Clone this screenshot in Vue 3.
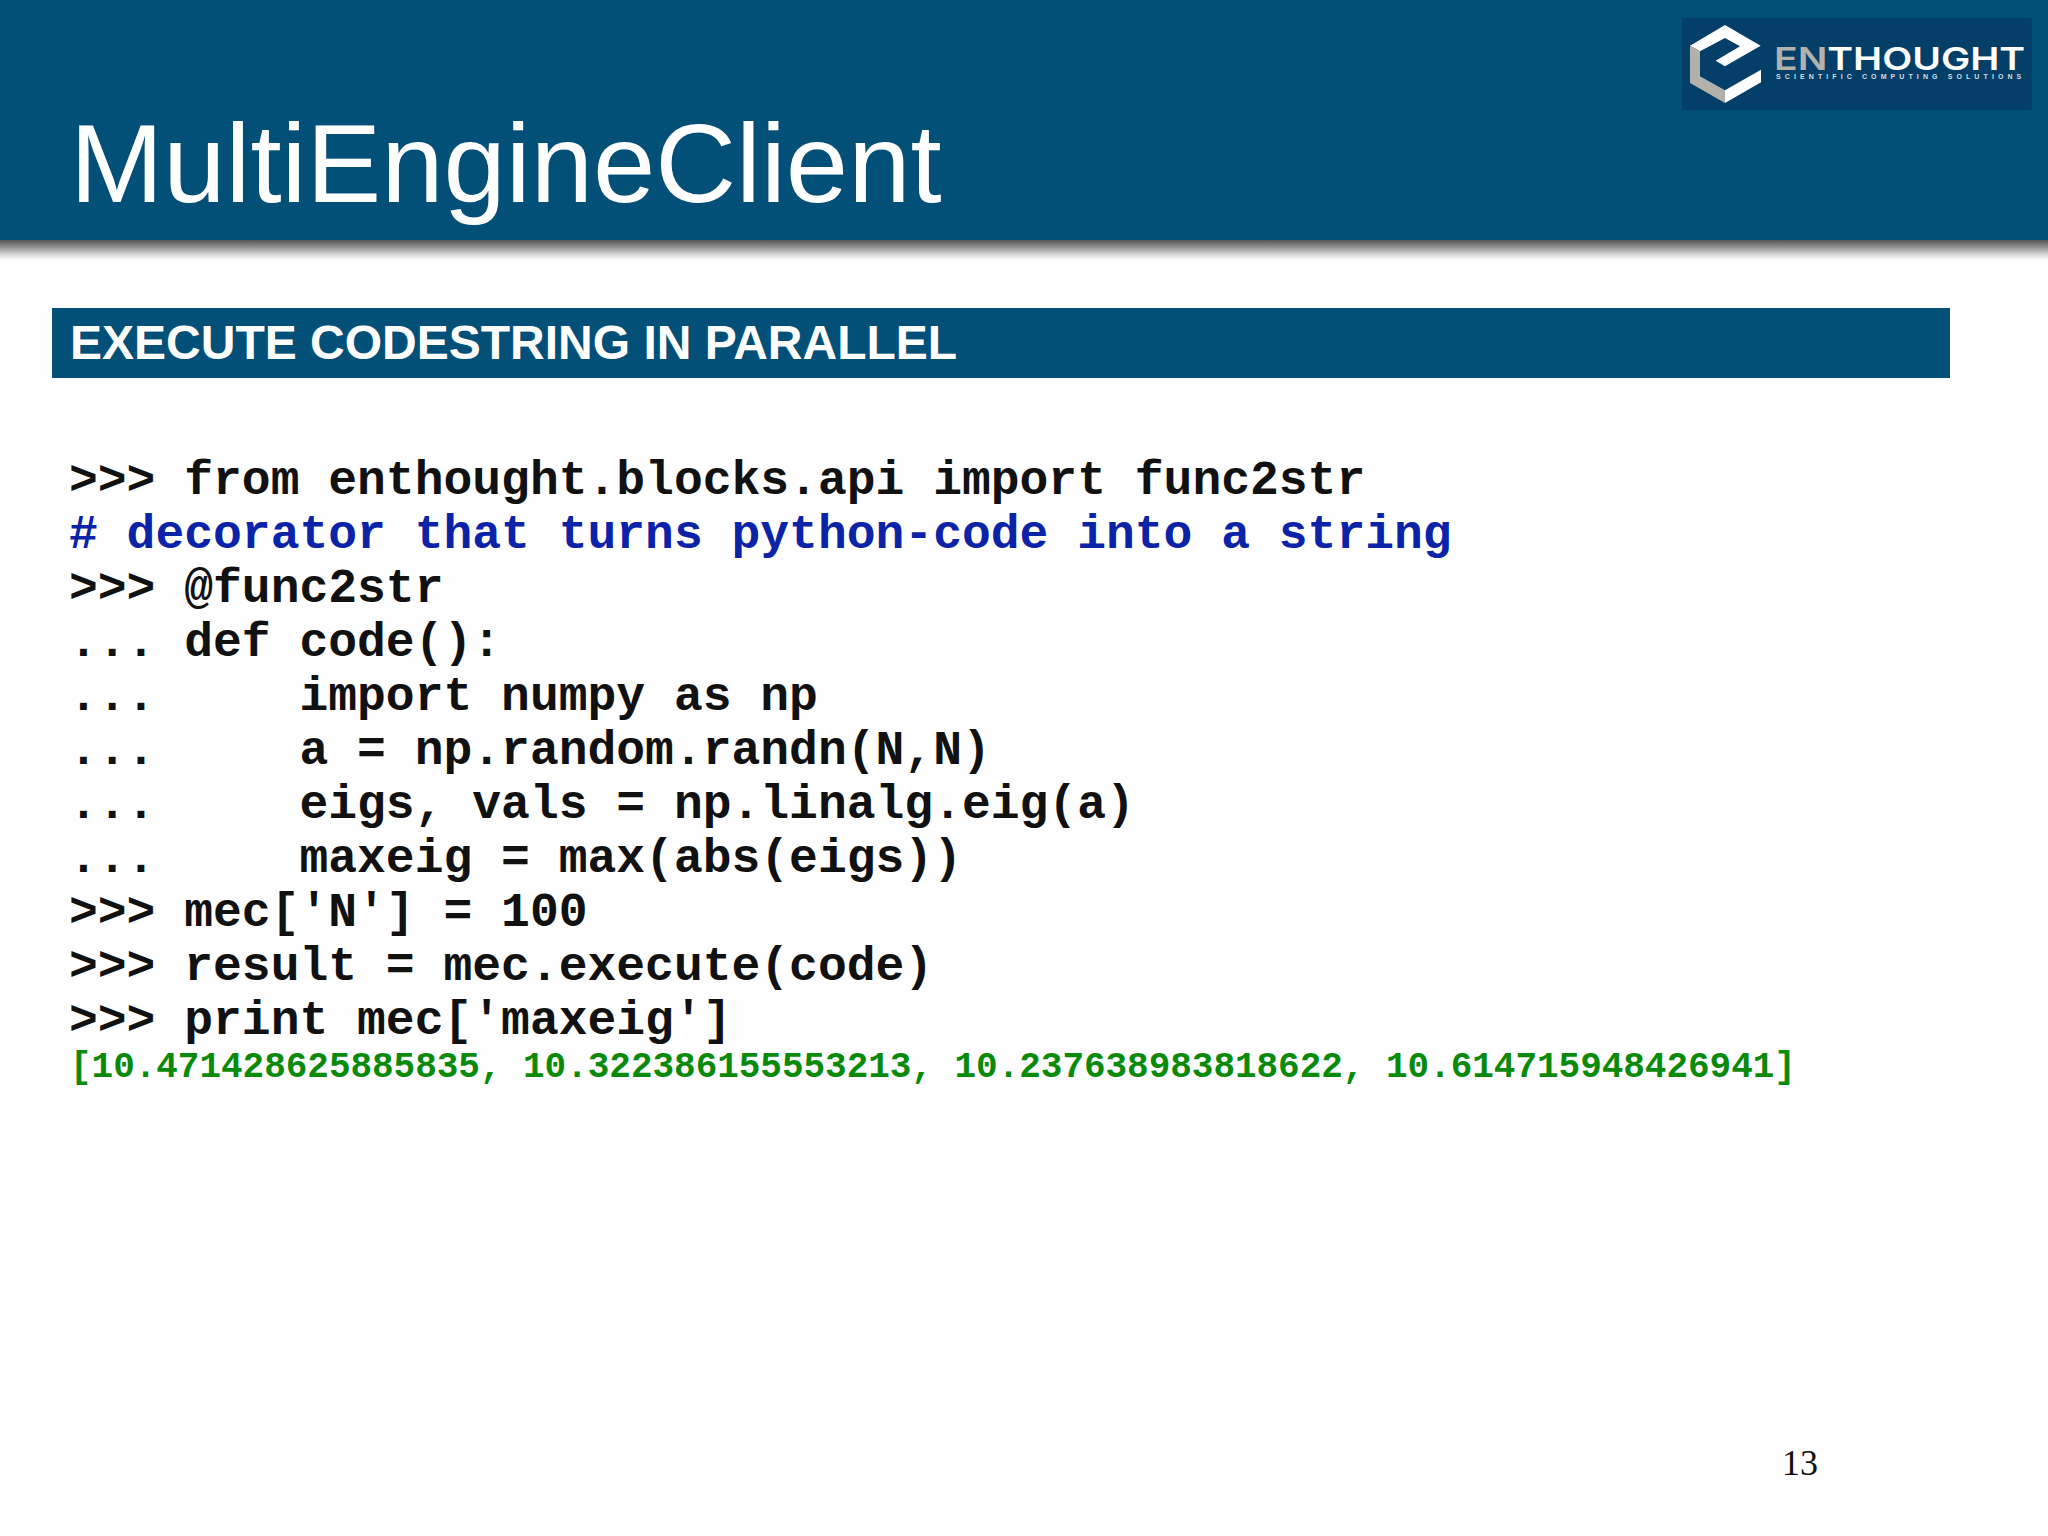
<script setup>
const lines = [
  { text: ">>> from enthought.blocks.api import func2str" },
  { text: "# decorator that turns python-code into a string", comment: true },
  { text: ">>> @func2str" },
  { text: "... def code():" },
  { text: "...     import numpy as np" },
  { text: "...     a = np.random.randn(N,N)" },
  { text: "...     eigs, vals = np.linalg.eig(a)" },
  { text: "...     maxeig = max(abs(eigs))" },
  { text: ">>> mec['N'] = 100" },
  { text: ">>> result = mec.execute(code)" },
  { text: ">>> print mec['maxeig']" },
];
</script>

<template>
  <div class="slide">
    <header class="header">
      <h1 class="title">MultiEngineClient</h1>
      <div class="logo">
        <svg class="mark" viewBox="30 26 213 234" aria-hidden="true">
          <polygon fill="#ffffff" points="30,88 135,26 242,88 135,150 107,133 180,90 135,65 60,105" />
          <polygon fill="#b3b1ab" points="30,88 60,105 60,180 135,222 135,260 30,200" />
          <polygon fill="#ffffff" points="135,222 243,160 243,198 135,260" />
        </svg>
        <div class="wordmark">
          <div class="brand"><span class="brand-en">EN</span>THOUGHT</div>
          <div class="tagline">SCIENTIFIC COMPUTING SOLUTIONS</div>
        </div>
      </div>
    </header>
    <div class="shadow"></div>
    <div class="section">EXECUTE CODESTRING IN PARALLEL</div>
    <div class="code">
      <div v-for="(line, i) in lines" :key="i" class="line" :class="{ comment: line.comment }">{{ line.text }}</div>
      <div class="output">[10.471428625885835, 10.322386155553213, 10.237638983818622, 10.614715948426941]</div>
    </div>
    <div class="page-number">13</div>
  </div>
</template>

<style>
html, body {
  margin: 0;
  background: #ffffff;
}
</style>

<style scoped>
.slide {
  width: 2048px;
  height: 1536px;
  overflow: hidden;
  background: #fefefe;
}
.header {
  height: 240px;
  background: #024f78;
  display: flex;
  justify-content: space-between;
  align-items: flex-start;
  padding: 18px 16px 0 70px;
  box-sizing: border-box;
}
.title {
  margin: 90px 0 0;
  color: #ffffff;
  font-family: "Liberation Sans", Arial, sans-serif;
  font-weight: 400;
  font-size: 112px;
  line-height: 112px;
}
.logo {
  width: 350px;
  height: 92px;
  box-sizing: border-box;
  padding: 7px 0 0 8px;
  background: #033f68;
  display: flex;
  gap: 13px;
}
.mark {
  width: 71px;
  height: 78px;
  flex: none;
}
.wordmark {
  padding-top: 21px;
  width: 247px;
}
.brand {
  color: #ffffff;
  font-family: Inter, "Liberation Sans", sans-serif;
  font-weight: 600;
  font-size: 31px;
  line-height: 26px;
  white-space: nowrap;
  transform: scaleX(1.26);
  transform-origin: left center;
}
.brand-en {
  color: #b3b1ab;
}
.tagline {
  margin: 1px 0 0 2px;
  color: #d6dde2;
  font-family: "Liberation Sans", Arial, sans-serif;
  font-weight: 700;
  font-size: 7px;
  line-height: 8px;
  letter-spacing: 4.1px;
  white-space: nowrap;
}
.shadow {
  height: 20px;
  background: linear-gradient(to bottom, #565656, #8f8f8f 35%, #dcdcdc 75%, #fefefe);
}
.section {
  margin: 48px 0 0 52px;
  width: 1898px;
  height: 70px;
  box-sizing: border-box;
  padding-left: 18px;
  background: #024f78;
  color: #ffffff;
  font-family: "Liberation Sans", Arial, sans-serif;
  font-weight: 700;
  font-size: 48px;
  line-height: 70px;
}
.code {
  margin-top: 76px;
  padding-left: 69px;
  font-family: "Liberation Mono", "Courier New", monospace;
  font-weight: 700;
}
.line {
  font-size: 48px;
  line-height: 54px;
  color: #111111;
  white-space: pre;
}
.comment {
  color: #0a23a8;
}
.output {
  margin: 2px 0 0 1px;
  font-size: 36px;
  line-height: 36px;
  letter-spacing: -0.03px;
  color: #0a8a0a;
  white-space: pre;
}
.page-number {
  margin: 359px 0 0 1782px;
  font-family: "Liberation Serif", "Times New Roman", serif;
  font-size: 36px;
  line-height: 36px;
  color: #111111;
}
</style>
